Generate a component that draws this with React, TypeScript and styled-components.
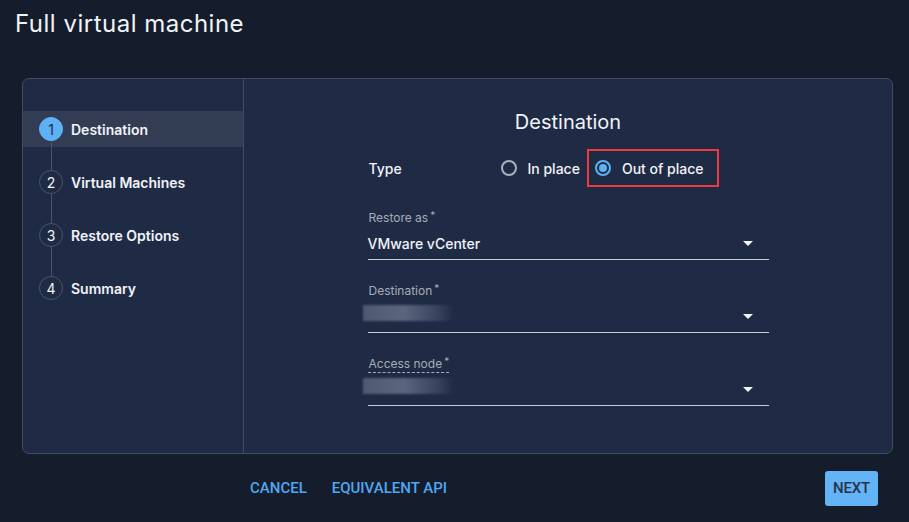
import styled, { createGlobalStyle } from 'styled-components';

const GlobalStyle = createGlobalStyle`
  body {
    margin: 0;
    background: #151c2c;
    font-family: Inter, "Noto Sans", sans-serif;
    color: #f1f3f6;
  }
`;

const Page = styled.div`
  width: 909px;
  height: 522px;
  display: flex;
  flex-direction: column;
  box-sizing: border-box;
`;

const Title = styled.h1`
  margin: 8px 0 0 15px;
  height: 31px;
  font-size: 24px;
  line-height: 31px;
  font-weight: 400;
  letter-spacing: 0.5px;
`;

const Card = styled.div`
  margin: 39px 16px 0 22px;
  height: 376px;
  box-sizing: border-box;
  border: 1px solid #414c60;
  border-radius: 7px;
  background: #1f2b45;
  display: flex;
  overflow: hidden;
`;

const Sidebar = styled.nav`
  width: 220px;
  flex-shrink: 0;
  border-right: 1px solid #414c60;
  padding-top: 32px;
  display: flex;
  flex-direction: column;
  gap: 17px;
`;

const Step = styled.div<{ $active?: boolean; $last?: boolean }>`
  position: relative;
  height: 36px;
  display: flex;
  align-items: center;
  gap: 8px;
  padding-left: 16px;
  background: ${(p) => (p.$active ? '#323d53' : 'transparent')};
  font-size: 14px;
  font-weight: 600;
  &::after {
    content: '';
    display: ${(p) => (p.$last ? 'none' : 'block')};
    position: absolute;
    left: 28px;
    top: 30px;
    width: 1px;
    height: 29px;
    background: #4a5468;
  }
`;

const StepNum = styled.span<{ $active?: boolean }>`
  width: 24px;
  height: 24px;
  box-sizing: border-box;
  border-radius: 50%;
  display: flex;
  align-items: center;
  justify-content: center;
  font-size: 14px;
  font-weight: 400;
  background: ${(p) => (p.$active ? '#5eb1f4' : 'transparent')};
  color: ${(p) => (p.$active ? '#1f2b45' : '#f1f3f6')};
  border: 1px solid ${(p) => (p.$active ? '#5eb1f4' : '#4a5468')};
`;

const Main = styled.section`
  flex: 1;
  padding-top: 31px;
  display: flex;
  flex-direction: column;
  align-items: center;
`;

const Heading = styled.h2`
  margin: 0;
  font-size: 20px;
  line-height: 24px;
  font-weight: 400;
`;

const Form = styled.div`
  width: 401px;
  margin-top: 15px;
  display: flex;
  flex-direction: column;
`;

const TypeRow = styled.div`
  height: 38px;
  display: flex;
  align-items: center;
  font-size: 14px;
  font-weight: 500;
`;

const TypeLabel = styled.span`
  width: 130px;
  padding-left: 1px;
`;

const Option = styled.label<{ $marked?: boolean }>`
  height: 38px;
  box-sizing: border-box;
  display: flex;
  align-items: center;
  gap: 11px;
  padding: ${(p) => (p.$marked ? '0 13px 0 6px' : '0 5px 0 0')};
  border: 2px solid ${(p) => (p.$marked ? '#ec3a3f' : 'transparent')};
`;

const Radio = styled.span<{ $checked?: boolean }>`
  width: 16px;
  height: 16px;
  box-sizing: border-box;
  border-radius: 50%;
  border: 2px solid ${(p) => (p.$checked ? '#5eb1f4' : '#a9b0bc')};
  display: flex;
  align-items: center;
  justify-content: center;
  &::after {
    content: '';
    display: ${(p) => (p.$checked ? 'block' : 'none')};
    width: 8px;
    height: 8px;
    border-radius: 50%;
    background: #5eb1f4;
  }
`;

const Field = styled.div<{ $first?: boolean }>`
  margin-top: 23px;
  display: flex;
  flex-direction: column;
  align-items: flex-start;
`;

const FieldLabel = styled.span<{ $dashed?: boolean }>`
  font-size: 12px;
  line-height: 16px;
  height: 16px;
  color: #a5adba;
  padding-left: 1px;
  border-bottom: 1px dashed ${(p) => (p.$dashed ? '#a5adba' : 'transparent')};
  sup {
    font-size: 10px;
    line-height: 0;
    vertical-align: 3px;
    margin-left: 2px;
  }
`;

const Select = styled.div`
  align-self: stretch;
  height: 33px;
  box-sizing: border-box;
  border-bottom: 1px solid #c8cdd6;
  display: flex;
  align-items: center;
  justify-content: space-between;
  padding: 0 16px 0 0;
  font-size: 14px;
  font-weight: 500;
`;

const Blurred = styled.span`
  width: 91px;
  height: 16px;
  margin: -6px 0 0 -5px;
  background: linear-gradient(90deg, #4e5a70 0%, #5a667d 45%, #3a4660 80%, #1f2b45 100%);
  filter: blur(0.8px);
`;

const Caret = styled.span`
  width: 0;
  height: 0;
  border-left: 5px solid transparent;
  border-right: 5px solid transparent;
  border-top: 5px solid #f1f3f6;
`;

const Footer = styled.footer`
  flex: 1;
  display: flex;
  align-items: center;
  padding: 0 31px 0 250px;
  gap: 25px;
`;

const LinkButton = styled.button`
  background: none;
  border: none;
  padding: 0;
  font-family: Roboto, "Liberation Sans", sans-serif;
  font-size: 15px;
  font-weight: 500;
  letter-spacing: 0;
  color: #4fa8f2;
`;

const NextButton = styled.button`
  margin-left: auto;
  width: 53px;
  height: 35px;
  border: none;
  border-radius: 3px;
  background: #63b4f6;
  color: #27324a;
  font-family: Roboto, "Liberation Sans", sans-serif;
  font-size: 15px;
  font-weight: 500;
  letter-spacing: -0.2px;
`;

const steps = ['Destination', 'Virtual Machines', 'Restore Options', 'Summary'];

export default function App() {
  return (
    <Page>
      <GlobalStyle />
      <Title>Full virtual machine</Title>
      <Card>
        <Sidebar>
          {steps.map((s, i) => (
            <Step key={s} $active={i === 0} $last={i === steps.length - 1}>
              <StepNum $active={i === 0}>{i + 1}</StepNum>
              {s}
            </Step>
          ))}
        </Sidebar>
        <Main>
          <Heading>Destination</Heading>
          <Form>
            <TypeRow>
              <TypeLabel>Type</TypeLabel>
              <Option>
                <Radio />
                In place
              </Option>
              <Option $marked>
                <Radio $checked />
                Out of place
              </Option>
            </TypeRow>
            <Field>
              <FieldLabel>
                Restore as<sup>*</sup>
              </FieldLabel>
              <Select>
                VMware vCenter
                <Caret />
              </Select>
            </Field>
            <Field>
              <FieldLabel>
                Destination<sup>*</sup>
              </FieldLabel>
              <Select>
                <Blurred />
                <Caret />
              </Select>
            </Field>
            <Field>
              <FieldLabel $dashed>
                Access node<sup>*</sup>
              </FieldLabel>
              <Select>
                <Blurred />
                <Caret />
              </Select>
            </Field>
          </Form>
        </Main>
      </Card>
      <Footer>
        <LinkButton>CANCEL</LinkButton>
        <LinkButton>EQUIVALENT API</LinkButton>
        <NextButton>NEXT</NextButton>
      </Footer>
    </Page>
  );
}
